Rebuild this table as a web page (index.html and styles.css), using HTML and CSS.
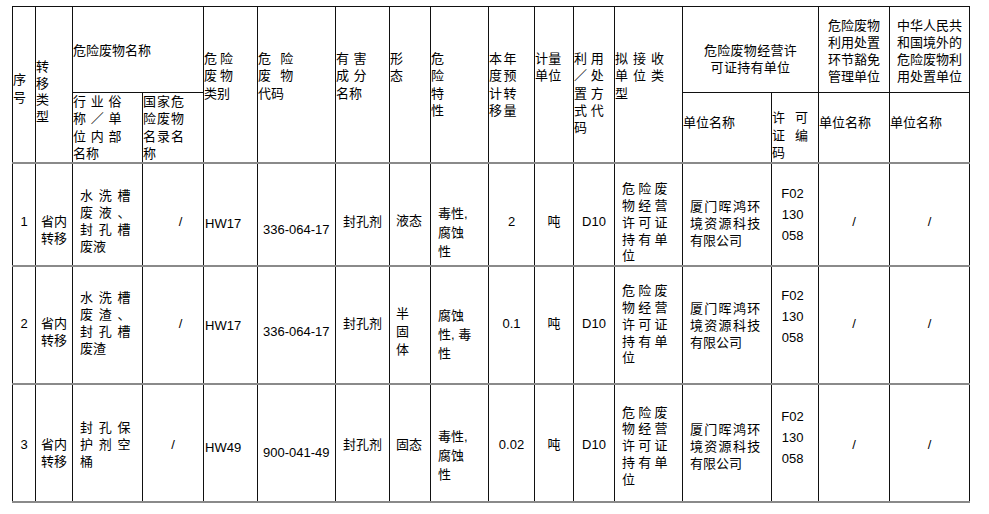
FILE: index.html
```html
<!DOCTYPE html>
<html lang="zh-CN">
<head>
<meta charset="utf-8">
<title>危险废物转移计划</title>
<link rel="stylesheet" href="styles.css">
</head>
<body>
<table class="waste-table">
  <colgroup>
    <col><col><col><col><col><col><col><col><col><col><col><col><col><col><col><col><col>
  </colgroup>
  <thead>
    <tr class="head-a">
      <th rowspan="2" class="h-seq">序<br>号</th>
      <th rowspan="2" class="h-type">转<br>移<br>类<br>型</th>
      <th colspan="2" class="h-name">危险废物名称</th>
      <th rowspan="2" class="h-col sp-cat">危险<br>废物<br><span class="last">类别</span></th>
      <th rowspan="2" class="h-col sp-code">危险<br>废物<br><span class="last">代码</span></th>
      <th rowspan="2" class="h-col sp-agent">有害<br>成分<br><span class="last">名称</span></th>
      <th rowspan="2" class="h-col">形<br>态</th>
      <th rowspan="2" class="h-col">危<br>险<br>特<br>性</th>
      <th rowspan="2" class="h-col sp-qty">本年<br>度预<br>计转<br>移量</th>
      <th rowspan="2" class="h-col sp-unit">计量<br>单位</th>
      <th rowspan="2" class="h-col sp-method">利用<br>／处<br>置方<br>式代<br>码</th>
      <th rowspan="2" class="h-col sp-recv">拟接收<br>单位类<br>型</th>
      <th colspan="2" class="h-permit">危险废物经营许<br>可证持有单位</th>
      <th class="h-center">危险废物<br>利用处置<br>环节豁免<br>管理单位</th>
      <th class="h-center">中华人民共<br>和国境外的<br>危险废物利<br>用处置单位</th>
    </tr>
    <tr class="head-b">
      <th class="h-sub sp-local">行业俗<br>称／单<br>位内部<br><span class="last">名称</span></th>
      <th class="h-sub sp-national">国家危<br>险废物<br>名录名<br>称</th>
      <th class="h-unitname">单位名称</th>
      <th class="h-sub2 sp-permit">许可<br>证编<br>码</th>
      <th class="h-unitname">单位名称</th>
      <th class="h-unitname">单位名称</th>
    </tr>
  </thead>
  <tbody>
    <tr class="r1">
      <td class="center">1</td>
      <td class="transfer">省内<br>转移</td>
      <td class="name">水洗槽<br>废液、<br>封孔槽<br><span class="last">废液</span></td>
      <td class="slash off">/</td>
      <td class="hw">HW17</td>
      <td class="code">336-064-17</td>
      <td class="agent">封孔剂</td>
      <td class="form">液态</td>
      <td class="hazard">毒性,<br>腐蚀<br>性</td>
      <td class="center">2</td>
      <td class="center">吨</td>
      <td class="center">D10</td>
      <td class="holder">危险废<br>物经营<br>许可证<br>持有单<br>位</td>
      <td class="company">厦门晖鸿环<br>境资源科技<br><span class="last">有限公司</span></td>
      <td class="permit-no">F02<br>130<br>058</td>
      <td class="center">/</td>
      <td class="center">/</td>
    </tr>
    <tr class="r2">
      <td class="center">2</td>
      <td class="transfer">省内<br>转移</td>
      <td class="name">水洗槽<br>废渣、<br>封孔槽<br><span class="last">废渣</span></td>
      <td class="slash off">/</td>
      <td class="hw">HW17</td>
      <td class="code">336-064-17</td>
      <td class="agent">封孔剂</td>
      <td class="form semi">半<br>固<br>体</td>
      <td class="hazard">腐蚀<br>性, 毒<br>性</td>
      <td class="center">0.1</td>
      <td class="center">吨</td>
      <td class="center">D10</td>
      <td class="holder">危险废<br>物经营<br>许可证<br>持有单<br>位</td>
      <td class="company">厦门晖鸿环<br>境资源科技<br><span class="last">有限公司</span></td>
      <td class="permit-no">F02<br>130<br>058</td>
      <td class="center">/</td>
      <td class="center">/</td>
    </tr>
    <tr class="r3">
      <td class="center">3</td>
      <td class="transfer">省内<br>转移</td>
      <td class="name">封孔保<br>护剂空<br>桶</td>
      <td class="slash">/</td>
      <td class="hw">HW49</td>
      <td class="code">900-041-49</td>
      <td class="agent">封孔剂</td>
      <td class="form">固态</td>
      <td class="hazard">毒性,<br>腐蚀<br>性</td>
      <td class="center">0.02</td>
      <td class="center">吨</td>
      <td class="center">D10</td>
      <td class="holder">危险废<br>物经营<br>许可证<br>持有单<br>位</td>
      <td class="company">厦门晖鸿环<br>境资源科技<br><span class="last">有限公司</span></td>
      <td class="permit-no">F02<br>130<br>058</td>
      <td class="center">/</td>
      <td class="center">/</td>
    </tr>
  </tbody>
</table>
</body>
</html>
```

FILE: styles.css
```css
html, body {
  margin: 0;
  background: #fff;
}

body {
  padding: 6px 0 0 12px;
  font-family: "Liberation Sans", "Noto Sans CJK SC", sans-serif;
  font-size: 13px;
  color: #000;
}

.waste-table {
  border-collapse: collapse;
  table-layout: fixed;
  width: 958px;
}

.waste-table col:nth-child(1)  { width: 23px; }
.waste-table col:nth-child(2)  { width: 37px; }
.waste-table col:nth-child(3)  { width: 70px; }
.waste-table col:nth-child(4)  { width: 61px; }
.waste-table col:nth-child(5)  { width: 54px; }
.waste-table col:nth-child(6)  { width: 78px; }
.waste-table col:nth-child(7)  { width: 54px; }
.waste-table col:nth-child(8)  { width: 41px; }
.waste-table col:nth-child(9)  { width: 58px; }
.waste-table col:nth-child(10) { width: 46px; }
.waste-table col:nth-child(11) { width: 39px; }
.waste-table col:nth-child(12) { width: 41px; }
.waste-table col:nth-child(13) { width: 68px; }
.waste-table col:nth-child(14) { width: 89px; }
.waste-table col:nth-child(15) { width: 47px; }
.waste-table col:nth-child(16) { width: 71px; }
.waste-table col:nth-child(17) { width: 80px; }

.waste-table th,
.waste-table td {
  border: 1px solid #111;
  padding: 0;
  font-weight: normal;
  text-align: left;
  white-space: nowrap;
}

/* ---------- header ---------- */
.waste-table th {
  vertical-align: top;
  line-height: 17.3px;
}

.head-a { height: 86px; }
.head-b { height: 70px; }

.h-seq  { padding-top: 64px !important; line-height: 18px !important; }
.h-type { padding-top: 52px !important; line-height: 16.7px !important; }
.h-name { padding-top: 35px !important; }
.h-col  { padding-top: 43px !important; }
.h-permit {
  padding-top: 36px !important;
  line-height: 16.5px !important;
  text-align: center !important;
  letter-spacing: 0.3px;
}
.h-center {
  padding-top: 9.5px !important;
  line-height: 17px !important;
  text-align: center !important;
}
.h-unitname { padding-top: 21px !important; }
.h-sub2 { padding-top: 16.4px !important; line-height: 17.5px !important; }

.sp-cat      { letter-spacing: 3px; }
.sp-code     { letter-spacing: 9.3px; }
.sp-agent    { letter-spacing: 4.6px; }
.sp-qty      { letter-spacing: 1.6px; }
.sp-unit     { letter-spacing: 0.3px; }
.sp-method   { letter-spacing: 3.7px; }
.sp-recv     { letter-spacing: 5px; }
.sp-local    { letter-spacing: 4.7px; }
.sp-national { letter-spacing: 1px; }
.sp-permit   { letter-spacing: 10px; }

.last { letter-spacing: 0; }

/* ---------- body ---------- */
.waste-table tbody td {
  vertical-align: middle;
  line-height: 17px;
  border-top: 2px solid #8a8a8a;
  border-bottom: 2px solid #8a8a8a;
  --col-pt: 0px;
  --col-pb: 0px;
  padding-top: calc(var(--row-pt, 0px) + var(--col-pt));
  padding-bottom: calc(var(--row-pb, 0px) + var(--col-pb));
}

.r1 { height: 103px; --row-pt: 13px; }
.r2 { height: 118px; --row-pb: 4px; }
.r3 { height: 118px; --row-pt: 3px; }

.waste-table .center   { text-align: center; }
.waste-table .transfer { text-align: center; --col-pt: 17px; }
.waste-table .name     { padding-left: 7px; letter-spacing: 5.7px; line-height: 17.3px; }
.waste-table .slash    { text-align: center; }
.waste-table .slash.off { padding-left: 15px; }
.waste-table .hw       { padding-left: 1px; --col-pt: 5px; }
.waste-table .code     { padding-left: 5px; --col-pt: 16px; }
.waste-table .agent    { padding-left: 7px; }
.waste-table .form     { padding-left: 6px; line-height: 18px; }
.waste-table .form.semi { --col-pt: 17px; }
.waste-table .hazard   { padding-left: 7px; line-height: 19px; --col-pt: 22px; }
.waste-table .holder   { padding-left: 7px; letter-spacing: 3.3px; line-height: 16.8px; --col-pt: 4px; }
.waste-table .company  { padding-left: 7px; letter-spacing: 1.3px; --col-pt: 4px; }
.waste-table .permit-no {
  text-align: center;
  padding-right: 5px;
  line-height: 21px;
  --col-pb: 14px;
}
```
